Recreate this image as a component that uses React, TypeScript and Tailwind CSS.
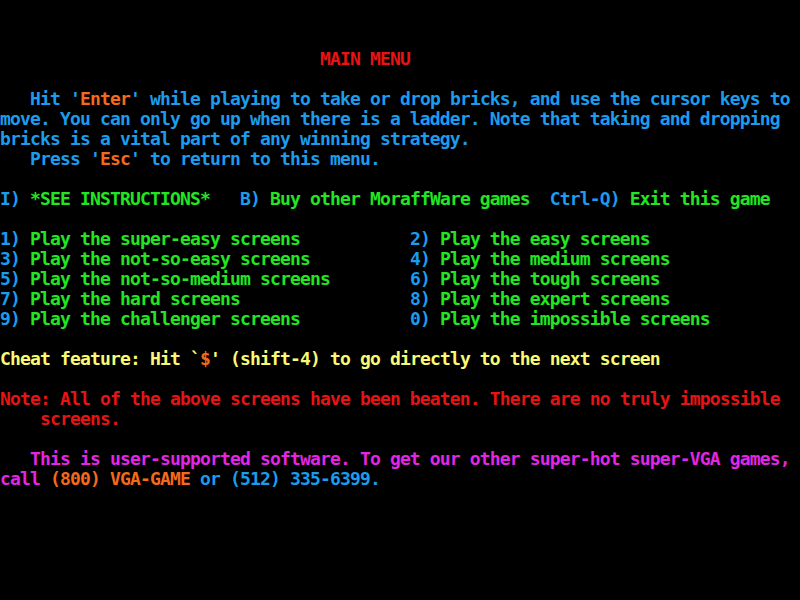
type Seg = [string, string];
type Line = Seg[];

const blue = 'text-[#1c9cec]';
const green = 'text-[#22e622]';
const orange = 'text-[#f46a1c]';
const red = 'text-[#e61414]';
const yellow = 'text-[#fafa72]';
const magenta = 'text-[#e426e4]';

const menuRows: [string, string, string, string][] = [
  ['1)', 'Play the super-easy screens', '2)', 'Play the easy screens'],
  ['3)', 'Play the not-so-easy screens', '4)', 'Play the medium screens'],
  ['5)', 'Play the not-so-medium screens', '6)', 'Play the tough screens'],
  ['7)', 'Play the hard screens', '8)', 'Play the expert screens'],
  ['9)', 'Play the challenger screens', '0)', 'Play the impossible screens'],
];

const lines: Line[] = [
  [['                                MAIN MENU', red]],
  [],
  [
    ['   Hit \'', blue],
    ['Enter', orange],
    ['\' while playing to take or drop bricks, and use the cursor keys to', blue],
  ],
  [['move. You can only go up when there is a ladder. Note that taking and dropping', blue]],
  [['bricks is a vital part of any winning strategy.', blue]],
  [
    ['   Press \'', blue],
    ['Esc', orange],
    ['\' to return to this menu.', blue],
  ],
  [],
  [
    ['I)', blue],
    [' *SEE INSTRUCTIONS*   ', green],
    ['B)', blue],
    [' Buy other MoraffWare games  ', green],
    ['Ctrl-Q)', blue],
    [' Exit this game', green],
  ],
  [],
  ...menuRows.map(([a, b, c, d]): Line => [
    [a, blue],
    [' ' + b.padEnd(38, ' '), green],
    [c, blue],
    [' ' + d, green],
  ]),
  [],
  [
    ['Cheat feature: Hit `', yellow],
    ['$', orange],
    ['\' (shift-4) to go directly to the next screen', yellow],
  ],
  [],
  [['Note: All of the above screens have been beaten. There are no truly impossible', red]],
  [['    screens.', red]],
  [],
  [['   This is user-supported software. To get our other super-hot super-VGA games,', magenta]],
  [
    ['call ', magenta],
    ['(800) VGA-GAME', orange],
    [' or (512) 335-6399.', blue],
  ],
];

export default function App() {
  return (
    <div className="w-[800px] h-[600px] bg-black overflow-hidden pt-[49px] font-['DejaVu_Sans_Mono','Liberation_Mono',monospace] text-[18px] tracking-[-0.84px] font-bold">
      {lines.map((line, i) => (
        <div key={i} className="h-[20px] leading-[20px] whitespace-pre">
          {line.map(([text, color], j) => (
            <span key={j} className={color}>
              {text}
            </span>
          ))}
        </div>
      ))}
    </div>
  );
}
